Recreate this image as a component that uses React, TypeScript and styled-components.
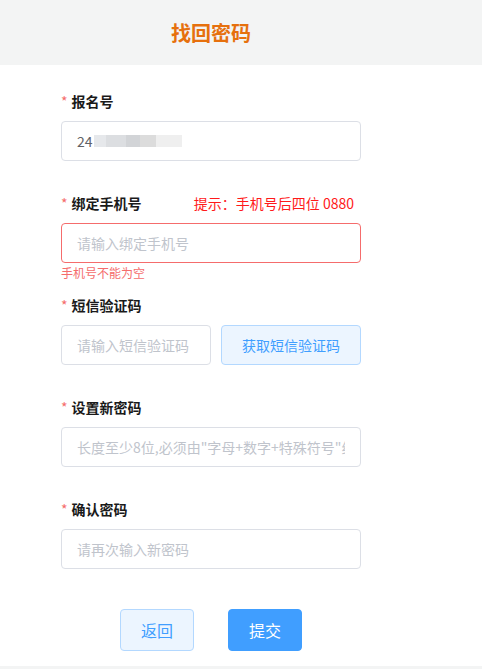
import React from 'react'
import styled, { createGlobalStyle } from 'styled-components'

const GlobalStyle = createGlobalStyle`
  html, body {
    margin: 0;
    padding: 0;
    background: #f3f4f4;
    font-family: "Microsoft YaHei", "Noto Sans CJK SC", "Liberation Sans", sans-serif;
  }
  input::placeholder {
    color: #c0c4cc;
  }
`

const App = () => {
  return (
    <>
      <GlobalStyle />
      <Page>
        <Header>
          <Title>找回密码</Title>
        </Header>
        <Body>
          <Form>
            <FormItem>
              <Label>报名号</Label>
              <FakeInput>
                24<Mosaic />
              </FakeInput>
            </FormItem>

            <FormItem>
              <LabelRow>
                <Label>绑定手机号</Label>
                <Hint>提示：手机号后四位 0880</Hint>
              </LabelRow>
              <Input placeholder="请输入绑定手机号" error />
              <ErrorText>手机号不能为空</ErrorText>
            </FormItem>

            <FormItem>
              <Label>短信验证码</Label>
              <CodeRow>
                <Input placeholder="请输入短信验证码" />
                <CodeButton>获取短信验证码</CodeButton>
              </CodeRow>
            </FormItem>

            <FormItem>
              <Label>设置新密码</Label>
              <Input placeholder={'长度至少8位,必须由"字母+数字+特殊符号"组成'} />
            </FormItem>

            <FormItem>
              <Label>确认密码</Label>
              <Input placeholder="请再次输入新密码" />
            </FormItem>
          </Form>
          <Actions>
            <ActionButton>返回</ActionButton>
            <ActionButton primary>提交</ActionButton>
          </Actions>
        </Body>
      </Page>
    </>
  )
}

const Page = styled.div`
  width: 482px;
  height: 669px;
  display: flex;
  flex-direction: column;
`

const Header = styled.div`
  height: 65px;
  background: #f3f4f4;
  display: flex;
  align-items: center;
  padding-left: 171px;
  box-sizing: border-box;
`

const Title = styled.div`
  font-size: 20px;
  font-weight: bold;
  color: #e6700d;
`

const Body = styled.div`
  background: #ffffff;
  height: 601px;
  padding: 16px 0 0 61px;
  box-sizing: border-box;
`

const Form = styled.div`
  width: 300px;
  display: flex;
  flex-direction: column;
`

const FormItem = styled.div`
  position: relative;
  margin-bottom: 22px;
`

const LabelRow = styled.div`
  display: flex;
  align-items: center;
  justify-content: space-between;
`

const Label = styled.div`
  height: 40px;
  line-height: 40px;
  font-size: 14px;
  font-weight: bold;
  color: #1a1a1a;
  &::before {
    content: '*';
    color: #f56c6c;
    margin-right: 4px;
    font-weight: normal;
  }
`

const Hint = styled.div`
  font-size: 14px;
  color: #ff1a1a;
  margin-right: 7px;
`

const Input = styled.input<{ error?: boolean }>`
  display: block;
  width: 100%;
  height: 40px;
  box-sizing: border-box;
  border: 1px solid ${(p) => (p.error ? '#f56c6c' : '#dcdfe6')};
  border-radius: 4px;
  padding: 0 15px;
  font-size: 14px;
  color: #606266;
  font-family: inherit;
  outline: none;
  background: #fff;
`

const FakeInput = styled.div`
  height: 40px;
  box-sizing: border-box;
  border: 1px solid #dcdfe6;
  border-radius: 4px;
  padding: 0 15px;
  font-size: 14px;
  color: #606266;
  display: flex;
  align-items: center;
`

const Mosaic = styled.span`
  display: inline-block;
  width: 88px;
  height: 12px;
  margin-left: 1px;
  background: linear-gradient(
    to right,
    #e6e8eb 0 14%,
    #dcdee1 14% 36%,
    #d2d4d7 36% 52%,
    #dcdcdc 52% 70%,
    #efefef 70% 100%
  );
`

const ErrorText = styled.div`
  position: absolute;
  top: 100%;
  left: 0;
  padding-top: 4px;
  font-size: 12px;
  line-height: 1;
  color: #f56c6c;
`

const CodeRow = styled.div`
  display: flex;
  gap: 10px;
  & > input {
    width: 150px;
  }
`

const CodeButton = styled.button`
  width: 140px;
  height: 40px;
  box-sizing: border-box;
  border: 1px solid #b3d8ff;
  border-radius: 4px;
  background: #ecf5ff;
  color: #409eff;
  font-size: 14px;
  font-family: inherit;
  padding: 0;
`

const Actions = styled.div`
  display: flex;
  gap: 34px;
  padding: 18px 0 0 59px;
`

const ActionButton = styled.button<{ primary?: boolean }>`
  width: 74px;
  height: 42px;
  box-sizing: border-box;
  border-radius: 4px;
  border: 1px solid ${(p) => (p.primary ? '#409eff' : '#b3d8ff')};
  background: ${(p) => (p.primary ? '#409eff' : '#ecf5ff')};
  color: ${(p) => (p.primary ? '#ffffff' : '#409eff')};
  font-size: 16px;
  font-family: inherit;
  padding: 0;
`

export default App
